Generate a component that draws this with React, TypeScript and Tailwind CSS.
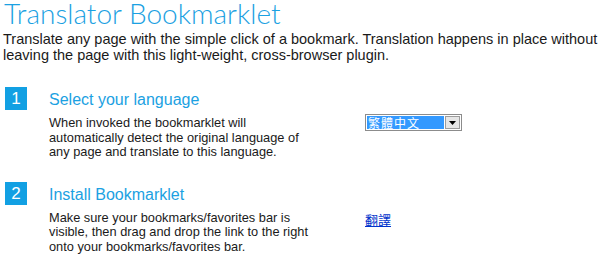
function StepBadge({ n }: { n: number }) {
  return (
    <div className="flex h-[23px] w-[22px] shrink-0 items-center justify-center bg-[#12a0e3] font-['Liberation_Sans',Arial,sans-serif] text-[17px] leading-none text-white">
      {n}
    </div>
  );
}

function LanguageSelect() {
  return (
    <div className="flex h-[17px] w-[97px] items-stretch border border-[#8c8c8c] bg-white p-[1px]">
      <div className="flex flex-1 items-center bg-[#3399ff] pl-[1px] font-['Noto_Sans_CJK_TC',sans-serif] text-[12px] leading-none tracking-[1px] text-white">
        繁體中文
      </div>
      <div className="ml-[1px] flex w-[15px] items-center justify-center border border-[#9c9c9c] bg-[#e6e6e6]">
        <svg width="7" height="4" viewBox="0 0 7 4">
          <path d="M0 0h7L3.5 4z" fill="#000" />
        </svg>
      </div>
    </div>
  );
}

function Step({
  n,
  title,
  text,
  children,
}: {
  n: number;
  title: string;
  text: string;
  children: React.ReactNode;
}) {
  return (
    <div className="flex">
      <div className="pl-[5px]">
        <StepBadge n={n} />
      </div>
      <div className="ml-[22px] w-[260px] pt-[3px]">
        <h2 className="font-['Liberation_Sans',Arial,sans-serif] text-[16px] leading-[20px] text-[#1ba1e2]">
          {title}
        </h2>
        <p className="mt-[6px] font-['Liberation_Sans',Arial,sans-serif] text-[12.8px] leading-[14.5px]">
          {text}
        </p>
      </div>
      <div className="ml-[56px]">{children}</div>
    </div>
  );
}

export default function App() {
  return (
    <div className="h-[257px] w-[600px] overflow-hidden bg-white text-[#1a1a1a]">
      <h1 className="pl-[4px] font-['Lato',sans-serif] text-[28px] font-light leading-[26px] text-[#1ba1e2]">
        Translator Bookmarklet
      </h1>
      <p className="mt-[5px] pl-[3px] font-['Liberation_Sans',Arial,sans-serif] text-[14.5px] leading-[16px]">
        Translate any page with the simple click of a bookmark. Translation happens in place without leaving the page with this light-weight, cross-browser plugin.
      </p>

      <div className="mt-[24px]">
        <Step
          n={1}
          title="Select your language"
          text="When invoked the bookmarklet will automatically detect the original language of any page and translate to this language."
        >
          <div className="pt-[27px]">
            <LanguageSelect />
          </div>
        </Step>
      </div>

      <div className="mt-[22px]">
        <Step
          n={2}
          title="Install Bookmarklet"
          text="Make sure your bookmarks/favorites bar is visible, then drag and drop the link to the right onto your bookmarks/favorites bar."
        >
          <div className="pt-[25px]">
            <a href="#" className="font-['Noto_Sans_CJK_TC',sans-serif] text-[13px] leading-none text-[#0033cc] underline">
              翻譯
            </a>
          </div>
        </Step>
      </div>
    </div>
  );
}
